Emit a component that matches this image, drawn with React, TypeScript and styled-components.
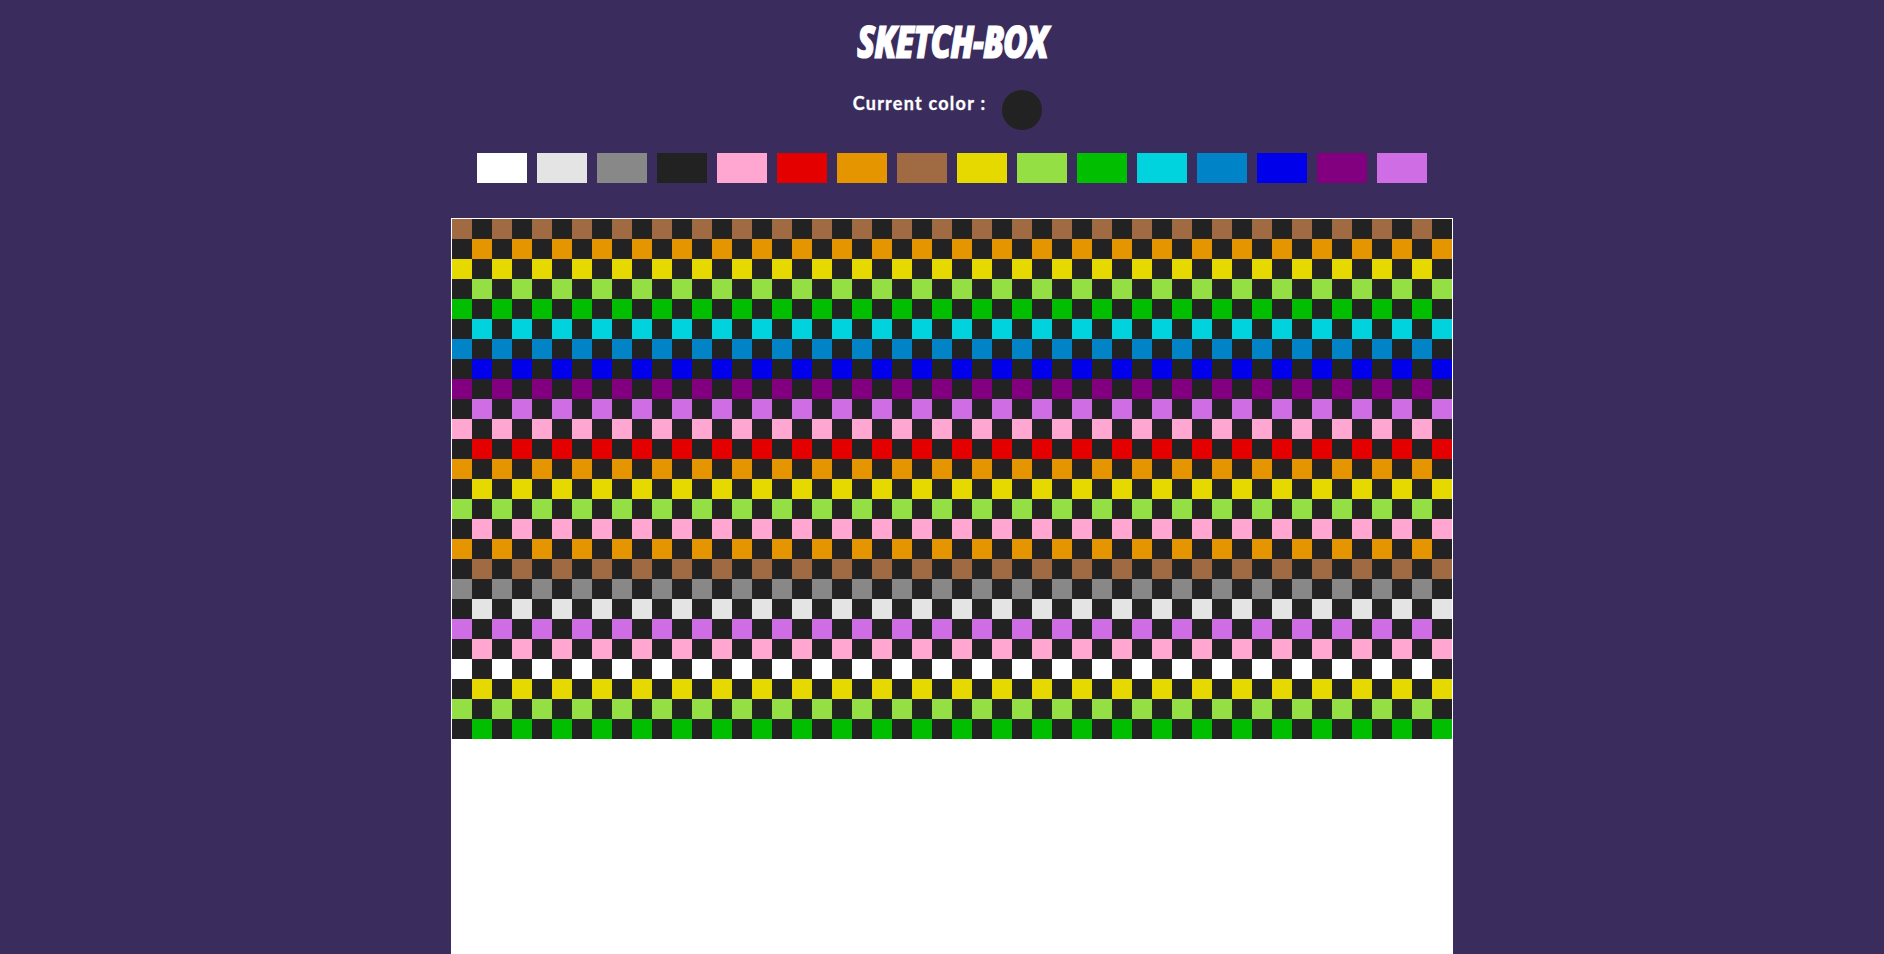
import { createGlobalStyle } from 'styled-components';
import styled from 'styled-components';

const palette = [
  '#ffffff', '#e4e4e4', '#888888', '#222222', '#ffa7d1', '#e50000', '#e59500', '#a06a42',
  '#e5d900', '#94e044', '#02be01', '#00d3dd', '#0083c7', '#0000ea', '#820080', '#cf6ee4',
];

const INK = '#222222';
const COLS = 50;

// one colour per painted row, top to bottom
const rowColors = [
  7, 6, 8, 9, 10, 11, 12, 13, 14, 15, 4, 5, 6, 8, 9, 4, 6, 7, 2, 1, 15, 4, 0, 8, 9, 10,
];

const GlobalStyle = createGlobalStyle`
  html, body {
    margin: 0;
    height: 100%;
    overflow: hidden;
    background: #3b2c5e;
  }
`;

const Page = styled.div`
  box-sizing: border-box;
  width: 100%;
  height: 954px;
  overflow: hidden;
  padding: 0 0 0 20px;
  display: flex;
  flex-direction: column;
  align-items: center;
  background: #3b2c5e;
  color: #fff;
`;

const Title = styled.h1`
  flex: none;
  margin: 0;
  padding-top: 14px;
  height: 62px;
  font-family: 'Open Sans', 'Liberation Sans', sans-serif;
  font-size: 44px;
  line-height: 54px;
  font-weight: 800;
  font-style: italic;
  letter-spacing: -1.5px;
  -webkit-text-stroke: 1.2px #fff;
  text-transform: uppercase;
  transform: scaleX(0.76);
`;

const Current = styled.div`
  flex: none;
  display: flex;
  align-items: flex-start;
  gap: 16px;
  margin: 14px 9px 0 0;
  height: 40px;
`;

const Label = styled.span`
  font-family: 'Lato', 'Liberation Sans', sans-serif;
  font-size: 18px;
  line-height: 26px;
  font-weight: 700;
  letter-spacing: 1.25px;
  -webkit-text-stroke: 0.3px #fff;
`;

const Dot = styled.div`
  width: 40px;
  height: 40px;
  border-radius: 50%;
  background: #222222;
`;

const Swatches = styled.div`
  flex: none;
  display: flex;
  gap: 10px;
  margin-top: 23px;
`;

const Swatch = styled.button<{ $color: string }>`
  display: block;
  width: 50px;
  height: 30px;
  padding: 0;
  border: 0;
  background: ${(p) => p.$color};
`;

const Board = styled.div`
  flex: none;
  margin-top: 35px;
  width: 1000px;
  height: 1000px;
  border: 1px solid #fff;
  background: #fff;
  display: grid;
  grid-template-columns: repeat(${COLS}, 20px);
  grid-auto-rows: 20px;
`;

const Cell = styled.div<{ $color: string }>`
  background: ${(p) => p.$color};
`;

export default function App() {
  return (
    <>
      <GlobalStyle />
      <Page>
        <Title>Sketch-Box</Title>
        <Current>
          <Label>Current color :</Label>
          <Dot />
        </Current>
        <Swatches>
          {palette.map((c) => (
            <Swatch key={c} $color={c} />
          ))}
        </Swatches>
        <Board>
          {rowColors.flatMap((colorIndex, row) =>
            Array.from({ length: COLS }, (_, col) => (
              <Cell
                key={`${row}-${col}`}
                $color={(row + col) % 2 === 0 ? palette[colorIndex] : INK}
              />
            )),
          )}
        </Board>
      </Page>
    </>
  );
}
